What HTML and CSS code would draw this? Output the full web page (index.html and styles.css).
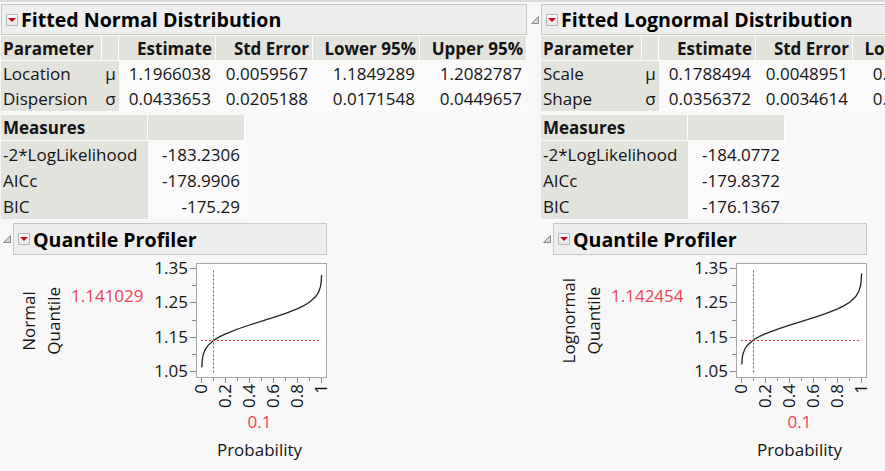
FILE: index.html
```html
<!DOCTYPE html>
<html lang="en">

<head>
    <meta charset="UTF-8">
    <title>Fitted Distributions</title>
    <link rel="stylesheet" href="styles.css">
</head>

<body>
    <div class="report">

        <!-- Normal fit -->
        <div class="outline main">
            <div class="toggle">
                <svg width="8" height="8" viewBox="0 0 8 8"><polygon points="0.5,7.5 7.5,7.5 7.5,0.5" fill="#d4d4d4" stroke="#8a8a8a" /></svg>
            </div>
            <div class="outline-body">
                <div class="outline-head"><span class="menu-btn"></span>Fitted Normal Distribution</div>
                <table class="grid params">
                    <colgroup>
                        <col class="c-lbl"><col class="c-sym"><col class="c-est"><col class="c-est"><col class="c-ci"><col class="c-ci">
                    </colgroup>
                    <thead>
                        <tr><th class="lbl">Parameter</th><th class="sym"></th><th>Estimate</th><th>Std Error</th><th>Lower 95%</th><th>Upper 95%</th></tr>
                    </thead>
                    <tbody>
                        <tr><td class="lbl">Location</td><td class="sym">μ</td><td>1.1966038</td><td>0.0059567</td><td>1.1849289</td><td>1.2082787</td></tr>
                        <tr><td class="lbl">Dispersion</td><td class="sym">σ</td><td>0.0433653</td><td>0.0205188</td><td>0.0171548</td><td>0.0449657</td></tr>
                    </tbody>
                </table>
                <table class="grid measures">
                    <colgroup><col class="c-meas"><col class="c-mval"></colgroup>
                    <thead>
                        <tr><th class="lbl">Measures</th><th></th></tr>
                    </thead>
                    <tbody>
                        <tr><td class="lbl">-2*LogLikelihood</td><td>-183.2306</td></tr>
                        <tr><td class="lbl">AICc</td><td>-178.9906</td></tr>
                        <tr><td class="lbl">BIC</td><td>-175.29</td></tr>
                    </tbody>
                </table>

                <div class="outline sub">
                    <div class="toggle">
                        <svg width="8" height="8" viewBox="0 0 8 8"><polygon points="0.5,7.5 7.5,7.5 7.5,0.5" fill="#d4d4d4" stroke="#8a8a8a" /></svg>
                    </div>
                    <div class="outline-body">
                        <div class="outline-head sub-head"><span class="menu-btn"></span>Quantile Profiler</div>
                        <div class="profiler">
                            <div class="y-title"><span>Normal<br>Quantile</span></div>
                            <div class="y-value">1.141029</div>
                            <div class="plot">
                                <svg class="chart" width="186" height="155" viewBox="0 0 186 155">
                                    <rect x="46.5" y="6.5" width="130" height="114" fill="#fff" stroke="#a8a8a8" />
                                    <g class="ticks">
                                        <line x1="40" y1="11.5" x2="46" y2="11.5" /><line x1="42" y1="28.5" x2="46" y2="28.5" />
                                        <line x1="40" y1="45.5" x2="46" y2="45.5" /><line x1="42" y1="63.5" x2="46" y2="63.5" />
                                        <line x1="40" y1="80.5" x2="46" y2="80.5" /><line x1="42" y1="97.5" x2="46" y2="97.5" />
                                        <line x1="40" y1="114.5" x2="46" y2="114.5" />
                                        <line x1="51.5" y1="121" x2="51.5" y2="126" /><line x1="63.5" y1="121" x2="63.5" y2="124" />
                                        <line x1="75.5" y1="121" x2="75.5" y2="126" /><line x1="87.5" y1="121" x2="87.5" y2="124" />
                                        <line x1="99.5" y1="121" x2="99.5" y2="126" /><line x1="111.5" y1="121" x2="111.5" y2="124" />
                                        <line x1="123.5" y1="121" x2="123.5" y2="126" /><line x1="135.5" y1="121" x2="135.5" y2="124" />
                                        <line x1="147.5" y1="121" x2="147.5" y2="126" /><line x1="159.5" y1="121" x2="159.5" y2="124" />
                                        <line x1="171.5" y1="121" x2="171.5" y2="126" />
                                    </g>
                                    <g class="tick-label">
                                        <text x="38" y="11.5" dy="0.35em" text-anchor="end">1.35</text>
                                        <text x="38" y="45.5" dy="0.35em" text-anchor="end">1.25</text>
                                        <text x="38" y="80.5" dy="0.35em" text-anchor="end">1.15</text>
                                        <text x="38" y="114.5" dy="0.35em" text-anchor="end">1.05</text>
                                        <text transform="rotate(-90 51.5 127)" x="51.5" y="127" dy="0.35em" text-anchor="end">0</text>
                                        <text transform="rotate(-90 75.5 127)" x="75.5" y="127" dy="0.35em" text-anchor="end">0.2</text>
                                        <text transform="rotate(-90 99.5 127)" x="99.5" y="127" dy="0.35em" text-anchor="end">0.4</text>
                                        <text transform="rotate(-90 123.5 127)" x="123.5" y="127" dy="0.35em" text-anchor="end">0.6</text>
                                        <text transform="rotate(-90 147.5 127)" x="147.5" y="127" dy="0.35em" text-anchor="end">0.8</text>
                                        <text transform="rotate(-90 171.5 127)" x="171.5" y="127" dy="0.35em" text-anchor="end">1</text>
                                    </g>
                                    <polyline class="curve" points="51.8,110.4 52.3,102.7 52.9,98.9 54.7,93.5 57.7,88.8 63.7,83.3 69.7,79.6 75.7,76.8 87.7,72.0 99.7,68.0 111.7,64.2 123.7,60.4 135.7,56.3 147.7,51.6 153.7,48.7 159.7,45.0 165.7,39.6 168.7,34.9 170.5,29.4 171.1,25.7 171.6,18.0" />
                                    <line class="cross" x1="63.5" y1="13.5" x2="63.5" y2="116" />
                                    <line class="cross" x1="51" y1="83.5" x2="169" y2="83.5" />
                                </svg>
                                <div class="x-value">0.1</div>
                                <div class="x-title">Probability</div>
                            </div>
                        </div>
                    </div>
                </div>
            </div>
        </div>

        <!-- Lognormal fit -->
        <div class="outline main">
            <div class="toggle">
                <svg width="8" height="8" viewBox="0 0 8 8"><polygon points="0.5,7.5 7.5,7.5 7.5,0.5" fill="#d4d4d4" stroke="#8a8a8a" /></svg>
            </div>
            <div class="outline-body">
                <div class="outline-head"><span class="menu-btn"></span>Fitted Lognormal Distribution</div>
                <table class="grid params">
                    <colgroup>
                        <col class="c-lbl"><col class="c-sym"><col class="c-est"><col class="c-est"><col class="c-ci"><col class="c-ci">
                    </colgroup>
                    <thead>
                        <tr><th class="lbl">Parameter</th><th class="sym"></th><th>Estimate</th><th>Std Error</th><th>Lower 95%</th><th>Upper 95%</th></tr>
                    </thead>
                    <tbody>
                        <tr><td class="lbl">Scale</td><td class="sym">μ</td><td>0.1788494</td><td>0.0048951</td><td>0.1692550</td><td>0.1884438</td></tr>
                        <tr><td class="lbl">Shape</td><td class="sym">σ</td><td>0.0356372</td><td>0.0034614</td><td>0.0294606</td><td>0.0431086</td></tr>
                    </tbody>
                </table>
                <table class="grid measures">
                    <colgroup><col class="c-meas"><col class="c-mval"></colgroup>
                    <thead>
                        <tr><th class="lbl">Measures</th><th></th></tr>
                    </thead>
                    <tbody>
                        <tr><td class="lbl">-2*LogLikelihood</td><td>-184.0772</td></tr>
                        <tr><td class="lbl">AICc</td><td>-179.8372</td></tr>
                        <tr><td class="lbl">BIC</td><td>-176.1367</td></tr>
                    </tbody>
                </table>

                <div class="outline sub">
                    <div class="toggle">
                        <svg width="8" height="8" viewBox="0 0 8 8"><polygon points="0.5,7.5 7.5,7.5 7.5,0.5" fill="#d4d4d4" stroke="#8a8a8a" /></svg>
                    </div>
                    <div class="outline-body">
                        <div class="outline-head sub-head"><span class="menu-btn"></span>Quantile Profiler</div>
                        <div class="profiler">
                            <div class="y-title"><span>Lognormal<br>Quantile</span></div>
                            <div class="y-value">1.142454</div>
                            <div class="plot">
                                <svg class="chart" width="186" height="155" viewBox="0 0 186 155">
                                    <rect x="46.5" y="6.5" width="130" height="114" fill="#fff" stroke="#a8a8a8" />
                                    <g class="ticks">
                                        <line x1="40" y1="11.5" x2="46" y2="11.5" /><line x1="42" y1="28.5" x2="46" y2="28.5" />
                                        <line x1="40" y1="45.5" x2="46" y2="45.5" /><line x1="42" y1="63.5" x2="46" y2="63.5" />
                                        <line x1="40" y1="80.5" x2="46" y2="80.5" /><line x1="42" y1="97.5" x2="46" y2="97.5" />
                                        <line x1="40" y1="114.5" x2="46" y2="114.5" />
                                        <line x1="51.5" y1="121" x2="51.5" y2="126" /><line x1="63.5" y1="121" x2="63.5" y2="124" />
                                        <line x1="75.5" y1="121" x2="75.5" y2="126" /><line x1="87.5" y1="121" x2="87.5" y2="124" />
                                        <line x1="99.5" y1="121" x2="99.5" y2="126" /><line x1="111.5" y1="121" x2="111.5" y2="124" />
                                        <line x1="123.5" y1="121" x2="123.5" y2="126" /><line x1="135.5" y1="121" x2="135.5" y2="124" />
                                        <line x1="147.5" y1="121" x2="147.5" y2="126" /><line x1="159.5" y1="121" x2="159.5" y2="124" />
                                        <line x1="171.5" y1="121" x2="171.5" y2="126" />
                                    </g>
                                    <g class="tick-label">
                                        <text x="38" y="11.5" dy="0.35em" text-anchor="end">1.35</text>
                                        <text x="38" y="45.5" dy="0.35em" text-anchor="end">1.25</text>
                                        <text x="38" y="80.5" dy="0.35em" text-anchor="end">1.15</text>
                                        <text x="38" y="114.5" dy="0.35em" text-anchor="end">1.05</text>
                                        <text transform="rotate(-90 51.5 127)" x="51.5" y="127" dy="0.35em" text-anchor="end">0</text>
                                        <text transform="rotate(-90 75.5 127)" x="75.5" y="127" dy="0.35em" text-anchor="end">0.2</text>
                                        <text transform="rotate(-90 99.5 127)" x="99.5" y="127" dy="0.35em" text-anchor="end">0.4</text>
                                        <text transform="rotate(-90 123.5 127)" x="123.5" y="127" dy="0.35em" text-anchor="end">0.6</text>
                                        <text transform="rotate(-90 147.5 127)" x="147.5" y="127" dy="0.35em" text-anchor="end">0.8</text>
                                        <text transform="rotate(-90 171.5 127)" x="171.5" y="127" dy="0.35em" text-anchor="end">1</text>
                                    </g>
                                    <polyline class="curve" points="51.8,107.4 52.3,100.6 52.9,97.2 54.7,92.2 57.7,87.9 63.7,82.8 69.7,79.3 75.7,76.6 87.7,72.1 99.7,68.1 111.7,64.4 123.7,60.7 135.7,56.7 147.7,51.9 153.7,48.9 159.7,45.2 165.7,39.5 168.7,34.6 170.5,28.8 171.1,24.8 171.6,16.4" />
                                    <line class="cross" x1="63.5" y1="13.5" x2="63.5" y2="116" />
                                    <line class="cross" x1="51" y1="83.5" x2="169" y2="83.5" />
                                </svg>
                                <div class="x-value">0.1</div>
                                <div class="x-title">Probability</div>
                            </div>
                        </div>
                    </div>
                </div>
            </div>
        </div>

    </div>
</body>

</html>
```

FILE: styles.css
```css
html,
body {
    margin: 0;
    overflow: hidden;
}

body {
    width: 885px;
    height: 471px;
    box-sizing: border-box;
    font-family: "Open Sans", "Noto Sans", sans-serif;
    font-size: 17px;
    color: #141414;
    background: #f8f8f8;
    border-top: 2px solid #dadada;
}

.report {
    display: flex;
    align-items: flex-start;
    margin-left: -9px;
    padding-top: 2px;
}

.outline {
    display: flex;
    align-items: flex-start;
}

.outline.main {
    width: 540px;
    flex: none;
}

.outline.sub {
    margin: 4px 0 0 2px;
}

.toggle {
    width: 10px;
    height: 31px;
    flex: none;
    display: flex;
    align-items: center;
}

.toggle svg {
    display: block;
}

.outline-head {
    width: 520px;
    height: 29px;
    box-sizing: content-box;
    border: 1px solid #c8c8c8;
    background: #eeeeee;
    display: flex;
    align-items: center;
    gap: 3px;
    padding-left: 4px;
    font-size: 19.6px;
    font-weight: bold;
    color: #000;
    white-space: nowrap;
}

.outline-head.sub-head {
    width: 308px;
    height: 30px;
}

.menu-btn {
    width: 10px;
    height: 10px;
    border: 1px solid #b4b4b4;
    border-radius: 1px;
    background: linear-gradient(#fdfdfd, #e6e6e6);
    position: relative;
    flex: none;
}

.menu-btn::after {
    content: "";
    position: absolute;
    left: 1px;
    top: 3px;
    border-left: 4px solid transparent;
    border-right: 4px solid transparent;
    border-top: 4px solid #d0021b;
}

/* report tables */
.grid {
    border-collapse: separate;
    border-spacing: 0;
    table-layout: fixed;
    margin-top: 1px;
}

.grid th,
.grid td {
    padding: 0 5px 0 2px;
    text-align: right;
    white-space: nowrap;
    overflow: hidden;
}

.grid th {
    height: 24px;
    font-weight: bold;
    background: #e3e3de;
    border-right: 1px solid #fff;
    border-bottom: 1px solid #fff;
    padding-right: 3px;
}

.grid td {
    height: 25px;
    background: #fafafa;
}

.grid .lbl {
    text-align: left;
}

.grid td.lbl,
.grid td.sym {
    background: #e3e3de;
}

.grid .sym {
    text-align: center;
    padding: 0;
}

.params {
    width: 525px;
}

.c-lbl { width: 101px; }
.c-sym { width: 17px; }
.c-est { width: 97px; }
.c-ci { width: 107px; }

.measures {
    width: 244px;
    margin-top: 4px;
}

.measures th {
    height: 25px;
}

.measures td {
    height: 26px;
}

.c-meas { width: 147px; }
.c-mval { width: 97px; }

/* quantile profiler */
.profiler {
    display: flex;
    align-items: flex-start;
}

.y-title {
    width: 50px;
    height: 114px;
    margin: 9px 0 0 3px;
    display: flex;
    align-items: center;
    justify-content: center;
}

.y-title span {
    writing-mode: vertical-rl;
    transform: rotate(180deg);
    line-height: 25px;
    text-align: center;
}

.y-value {
    width: 79px;
    margin: 29px 0 0 5px;
    line-height: 23px;
    color: #ee4357;
}

.plot {
    display: flex;
    flex-direction: column;
}

.chart {
    display: block;
    margin-top: 2px;
}

.ticks line {
    stroke: #8c8c8c;
    stroke-width: 1;
}

.tick-label text {
    font-family: "Open Sans", "Noto Sans", sans-serif;
    font-size: 17px;
    fill: #141414;
}

.curve {
    fill: none;
    stroke: #222;
    stroke-width: 1.3;
}

.cross {
    stroke: #e8303f;
    stroke-width: 1;
    stroke-dasharray: 2 2;
}

.x-value,
.x-title {
    margin-left: 44px;
    width: 131px;
    text-align: center;
}

.x-value {
    line-height: 20px;
    color: #ee4357;
}

.x-title {
    margin-top: 7px;
    line-height: 22px;
}
```
